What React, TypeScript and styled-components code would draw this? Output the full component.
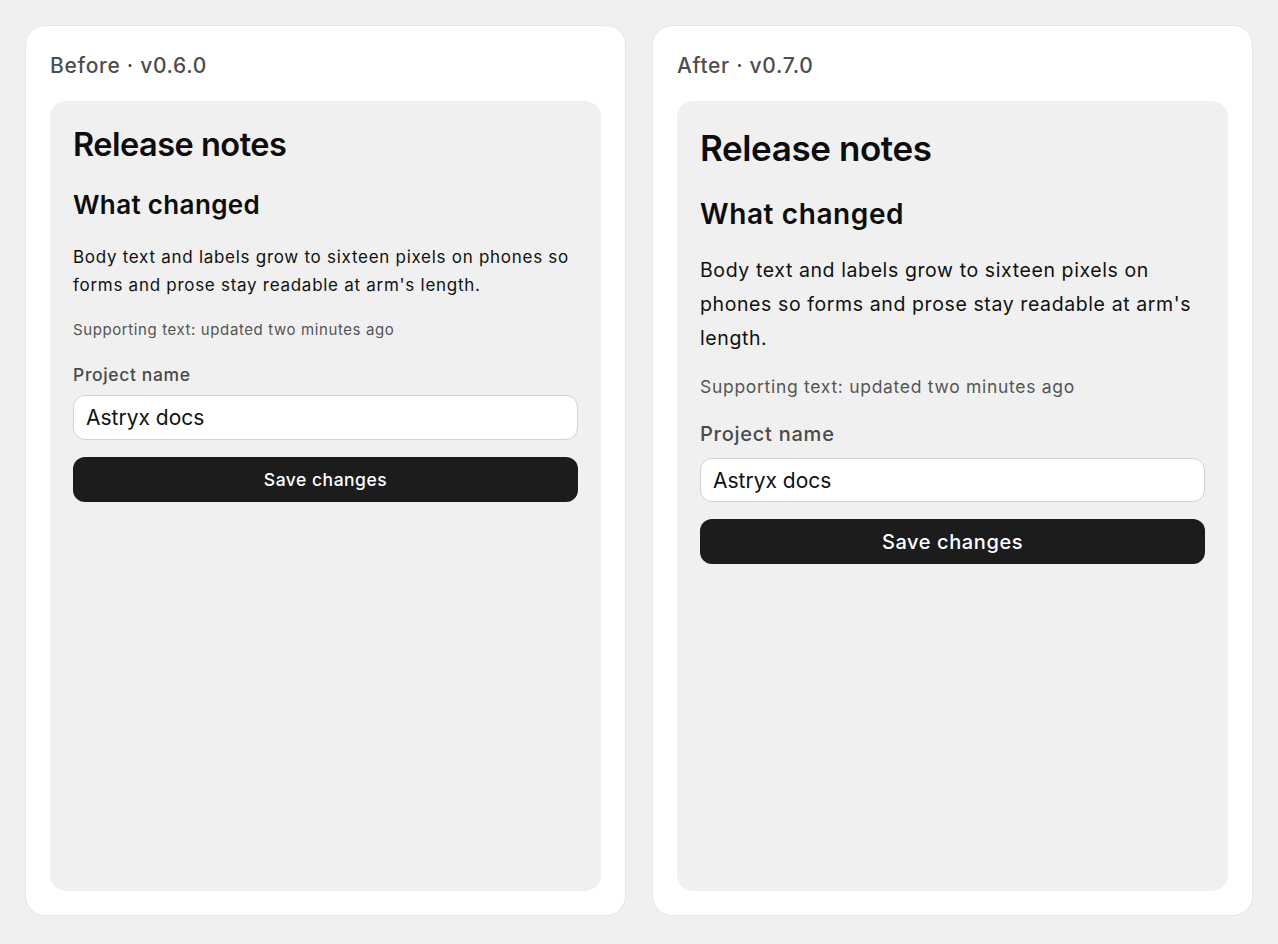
import React from "react";
import styled, { createGlobalStyle, css } from "styled-components";

const Global = createGlobalStyle`
  html, body, #root { margin: 0; padding: 0; height: 100%; }
  body {
    background: #f0f0f0;
    font-family: Inter, "Noto Sans", sans-serif;
    color: #111;
    -webkit-font-smoothing: antialiased;
  }
  * { box-sizing: border-box; }
`;

type V = { $after?: boolean };

const Page = styled.main`
  height: 100%;
  display: grid;
  grid-template-columns: 1fr 1fr;
  gap: 26px;
  padding: 25px 25px 28px 25px;
`;

const Card = styled.section`
  background: #fff;
  border: 1px solid #e6e6e6;
  border-radius: 20px;
  padding: 24px;
  display: flex;
  flex-direction: column;
  min-height: 0;
`;

const CardTitle = styled.div`
  font-size: 21px;
  line-height: 32px;
  font-weight: 500;
  letter-spacing: 0.7px;
  color: #4d4d4d;
  margin: 0 0 19px 0;
`;

const Panel = styled.div`
  flex: 1;
  background: #f0f0f0;
  border-radius: 16px;
  padding: 24px 23px;
  display: flex;
  flex-direction: column;
`;

const H1 = styled.h1<V>`
  margin: 0;
  font-weight: 600;
  color: #0d0d0d;
  ${(p) =>
    p.$after
      ? css`font-size: 35px; line-height: 46px; letter-spacing: -0.4px;`
      : css`font-size: 32.5px; line-height: 40px; letter-spacing: -0.5px;`}
`;

const H2 = styled.h2<V>`
  margin: 24px 0 0 0;
  font-weight: 600;
  color: #0d0d0d;
  ${(p) =>
    p.$after
      ? css`font-size: 28px; line-height: 38px; letter-spacing: 0.6px;`
      : css`font-size: 26px; line-height: 32px; letter-spacing: 0.35px;`}
`;

const Body = styled.p<V>`
  margin: 0;
  color: #111;
  ${(p) =>
    p.$after
      ? css`font-size: 19.5px; line-height: 34px; margin-top: 20px; letter-spacing: 0.6px;`
      : css`font-size: 17px; line-height: 28px; margin-top: 22px; letter-spacing: 0.72px;`}
`;

const Support = styled.p<V>`
  margin: 0;
  color: #555;
  ${(p) =>
    p.$after
      ? css`font-size: 17.5px; line-height: 26px; margin-top: 19px; letter-spacing: 0.7px;`
      : css`font-size: 15px; line-height: 22px; margin-top: 20px; letter-spacing: 0.6px;`}
`;

const Label = styled.label<V>`
  display: block;
  color: #4a4a4a;
  font-weight: 500;
  ${(p) =>
    p.$after
      ? css`font-size: 20px; line-height: 28px; margin-top: 20px; letter-spacing: 0.75px;`
      : css`font-size: 17.5px; line-height: 24px; margin-top: 22px; letter-spacing: 0.65px;`}
`;

const Input = styled.input<V>`
  display: block;
  width: 100%;
  border: 1px solid #d2d2d2;
  border-radius: 12px;
  background: #fff;
  font-family: inherit;
  font-size: 21px;
  color: #111;
  padding: 0 12px;
  outline: none;
  ${(p) =>
    p.$after
      ? css`height: 44px; margin-top: 10px;`
      : css`height: 45px; margin-top: 8px;`}
`;

const Button = styled.button<V>`
  display: block;
  width: 100%;
  height: 45px;
  margin-top: 17px;
  border: none;
  border-radius: 12px;
  background: #1c1c1c;
  color: #fff;
  font-family: inherit;
  font-weight: 500;
  cursor: pointer;
  ${(p) =>
    p.$after
      ? css`font-size: 20px; letter-spacing: 0.6px;`
      : css`font-size: 17.5px; letter-spacing: 0.5px;`}
`;

function Preview({ title, after }: { title: string; after?: boolean }) {
  return (
    <Card>
      <CardTitle>{title}</CardTitle>
      <Panel>
        <H1 $after={after}>Release notes</H1>
        <H2 $after={after}>What changed</H2>
        <Body $after={after}>
          Body text and labels grow to sixteen pixels on phones so forms and
          prose stay readable at arm's length.
        </Body>
        <Support $after={after}>Supporting text: updated two minutes ago</Support>
        <Label $after={after}>Project name</Label>
        <Input $after={after} defaultValue="Astryx docs" />
        <Button $after={after}>Save changes</Button>
      </Panel>
    </Card>
  );
}

export default function App() {
  return (
    <>
      <Global />
      <Page>
        <Preview title="Before · v0.6.0" />
        <Preview title="After · v0.7.0" after />
      </Page>
    </>
  );
}
